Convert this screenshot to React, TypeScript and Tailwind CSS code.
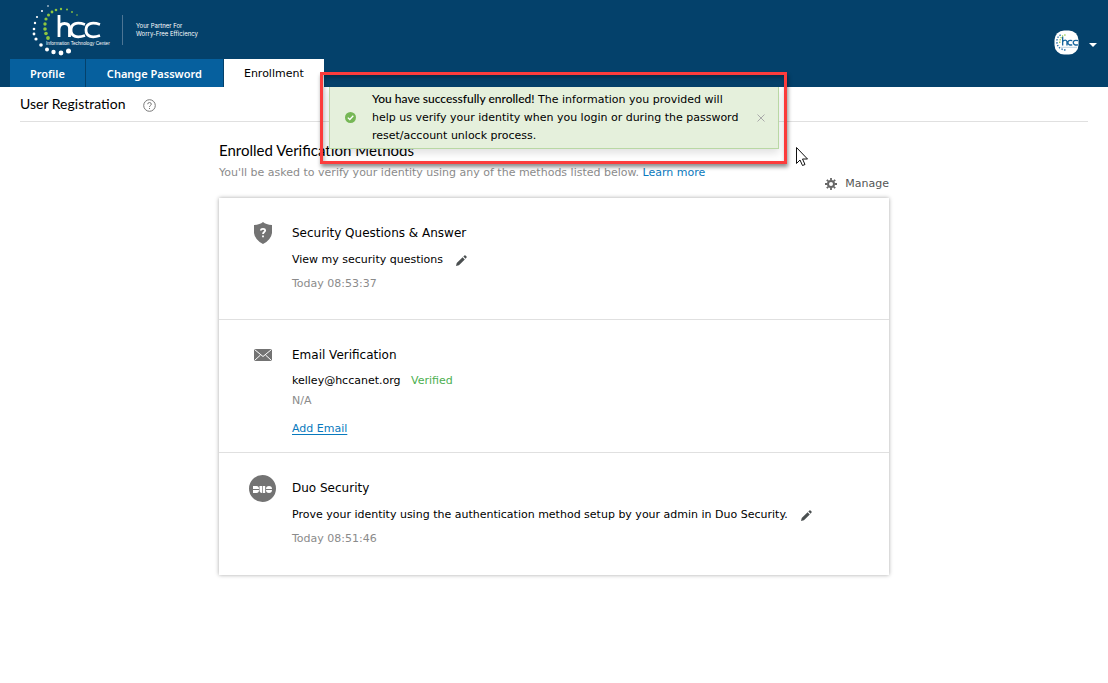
import React from "react";

const body = "text-[11px] leading-[18px]";

function Logo() {
  const dots: [number, number, number, string][] = [
    [48, 6, 0.8, "#fff"], [42, 11, 1, "#fff"], [37, 17, 1.1, "#fff"], [35, 23, 1.2, "#fff"], [34, 29, 1.3, "#fff"], [34, 34, 1.4, "#fff"], [36, 39, 1.6, "#fff"], [41, 45, 1.8, "#fff"], [47, 49.5, 2, "#fff"], [53.5, 52, 2.2, "#fff"], [61, 53, 2.4, "#fff"], [68.5, 51, 2.5, "#fff"],
    [77, 15, 0.8, "#8dc63f"], [72, 12, 0.9, "#8dc63f"], [67, 9.5, 1, "#8dc63f"], [61, 9, 1.2, "#8dc63f"], [56, 10, 1.3, "#8dc63f"], [52, 12, 1.4, "#8dc63f"], [48.5, 15, 1.5, "#8dc63f"], [46, 19, 1.6, "#8dc63f"], [45, 24, 1.7, "#8dc63f"], [45, 29, 1.8, "#8dc63f"], [46, 33.5, 1.8, "#8dc63f"], [48, 38, 1.9, "#8dc63f"],
  ];
  return (
    <svg viewBox="32 0 174 58" className="h-[58px] w-[174px]" role="img" aria-label="hcc Information Technology Center">
      {dots.map(([x, y, r, c], i) => <circle key={i} cx={x} cy={y} r={r} fill={c} />)}
      <g fill="none" stroke="#fff" strokeWidth="2.800">
        <path d="M59 15V37M59 29Q59.500 23.500 64.500 23.500Q69.500 23.500 69.500 28.500V37" />
        <path d="M85 24.500C76 21.500 71 24 71 30S76 38.500 85 35.500" />
        <path d="M100 24.500C91 21.500 86 24 86 30S91 38.500 100 35.500" />
      </g>
      <text x="46" y="45" fontSize="4.700" fill="#fff" fontFamily="Liberation Sans, sans-serif">Information Technology Center</text>
      <path d="M122.500 15V45" stroke="#4d7594" />
      <g fontSize="6" fill="#fff" fontFamily="Inter, sans-serif">
        <text x="136" y="28">Your Partner For</text>
        <text x="136" y="36">Worry-Free Efficiency</text>
      </g>
    </svg>
  );
}

function Pencil() {
  return (
    <svg viewBox="0 0 12 12" className="ml-px size-[11px]" fill="#4a4f50" aria-hidden="true">
      <path d="M0 12L.8 8.800 7.200 2.400 9.600 4.800 3.200 11.200ZM8 1.600L9.200.5Q9.800 0 10.400.5L11.500 1.600Q12 2.200 11.500 2.800L10.400 4Z" />
    </svg>
  );
}

function Shield() {
  return (
    <svg viewBox="0 0 18 22" className="h-[22px] w-[18px]" aria-hidden="true">
      <path d="M9 0Q6 2.500 0 3V11Q1 18 9 22Q17 18 18 11V3Q12 2.500 9 0Z" fill="#737373" />
      <path d="M6.800 8.500Q7 6.800 9 6.800T11.200 8.500C11.200 10 9 10 9 12M9 13.500V15.300" fill="none" stroke="#fff" strokeWidth="1.800" />
    </svg>
  );
}

function Envelope() {
  return (
    <svg viewBox="0 0 18 12" className="h-3 w-[18px]" aria-hidden="true">
      <rect width="18" height="12" rx="1" fill="#737373" />
      <path d="M.5.500L9 7.500 17.500.500M.5 11.500L6.500 6M17.500 11.500L11.500 6" fill="none" stroke="#fff" strokeWidth="1" />
    </svg>
  );
}

function Duo() {
  return (
    <svg viewBox="0 0 27 27" className="size-[27px]" aria-hidden="true">
      <circle cx="13.500" cy="13.500" r="13.500" fill="#737373" />
      <g fill="#fff">
        <path d="M4 11H7.500Q10 11 10 14H4ZM4 15H10Q10 18 7.500 18H4Z" />
        <path d="M10.500 11H13V18Q10.500 18 10.500 15ZM13.700 11H16.200V18H13.700Z" />
        <path d="M17 14Q17 11 20 11T23 14ZM17 15H23Q23 18 20 18T17 15Z" />
      </g>
    </svg>
  );
}

function Method({ icon, title, className, children }: { icon: React.ReactNode; title: string; className: string; children: React.ReactNode }) {
  return (
    <section className={`flex border-[#e0e0e0] pt-6 pr-6 pl-7 ${className}`}>
      <div className="flex h-[22px] w-[31px] shrink-0 items-center justify-center">{icon}</div>
      <div className="ml-3.5 min-w-0">
        <h3 className="text-[12px] leading-[22px]">{title}</h3>
        {children}
      </div>
    </section>
  );
}

export default function App() {
  return (
    <div className="min-h-screen bg-white font-['DejaVu_Sans',Verdana,sans-serif] text-black">
      <header className="flex h-[87px] flex-col justify-between bg-[#04416b]">
        <div className="flex h-[59px] items-start justify-between pl-8">
          <Logo />
          <button aria-label="Account menu" className="mt-[30px] mr-[11px] flex items-center gap-2.5">
            <svg viewBox="0 0 26 26" className="size-[25px]" aria-hidden="true">
              <rect width="25" height="25" x=".5" y=".5" rx="10" fill="#fff" />
              <path d="M7 5Q3 7 3 12Q3 20 13 21" fill="none" stroke="#2c73ad" strokeWidth="1.500" strokeDasharray="1.500 1.500" />
              <path d="M12 5Q6 6 6 14" fill="none" stroke="#8dc63f" strokeWidth="1.300" strokeDasharray="1.300 1.200" />
              <path d="M9 7V16M9 12Q12 9 13.500 12V16M19 11Q14.500 10 14.500 13T19 15.500M25 11Q20 10 20 13T25 15.500" fill="none" stroke="#17659e" strokeWidth="1.400" />
              <path d="M7 18H24" stroke="#b9d0e1" />
            </svg>
            <svg viewBox="0 0 8 4" className="mt-1 h-1 w-2" aria-hidden="true"><path d="M0 0H8L4 4Z" fill="#fff" /></svg>
          </button>
        </div>
        <nav className="flex h-7 gap-px pl-2.5 font-['Noto_Sans',sans-serif] text-[11px] font-semibold text-white">
          <a href="#profile" className="flex items-center bg-[#06609e] px-5 pt-0.5">Profile</a>
          <a href="#password" className="flex items-center bg-[#06609e] px-[21px] pt-0.5">Change Password</a>
          <a href="#enrollment" aria-current="page" className="flex items-center bg-white px-5 pt-0.5 font-['DejaVu_Sans',sans-serif] font-normal text-black">Enrollment</a>
        </nav>
      </header>

      <div className="mx-5 flex h-[35px] items-center gap-[18px] border-b border-[#e0e0e0]">
        <h1 className="font-['Lato',sans-serif] text-[14px] leading-5">User Registration</h1>
        <button aria-label="Help" className="mt-0.5">
          <svg viewBox="0 0 13 13" className="size-[13px]" fill="none" stroke="#777" aria-hidden="true">
            <circle cx="6.500" cy="6.500" r="5.800" />
            <path d="M4.700 5.200Q4.800 3.500 6.500 3.500T8.300 5.200C8.300 6.500 6.500 6.500 6.500 8M6.500 9V10" />
          </svg>
        </button>
      </div>

      <main className="mx-auto mt-[18px] w-full max-w-[670px]">
        <div className="flex items-end justify-between">
          <div>
            <h2 className="font-['Lato',sans-serif] text-[15px] leading-5">Enrolled Verification Methods</h2>
            <p className={`${body} mt-1 mb-4 text-[#8b8b8b]`}>
              You'll be asked to verify your identity using any of the methods listed below. <a href="#learn" className="text-[#0879bd]">Learn more</a>
            </p>
          </div>
          <button className="mb-1.5 flex items-center gap-2 text-[11px] text-[#555]">
            <svg viewBox="0 0 12 12" className="size-3" fill="none" stroke="#666" aria-hidden="true">
              <circle cx="6" cy="6" r="3" strokeWidth="2" />
              <path d="M6 0V2M6 10V12M0 6H2M10 6H12M1.800 1.800L3.200 3.200M8.800 8.800L10.200 10.200M1.800 10.200L3.200 8.800M8.800 3.200L10.200 1.800" strokeWidth="1.800" />
            </svg>
            Manage
          </button>
        </div>

        <div className="bg-white shadow-[0_0_4px_rgba(0,0,0,0.35)]">
          <Method icon={<Shield />} title="Security Questions &amp; Answer" className="h-[121px]">
            <p className={`${body} mt-[7px] flex items-center gap-3`}>View my security questions <button aria-label="Edit security questions"><Pencil /></button></p>
            <p className={`${body} mt-1.5 text-[#8b8b8b]`}>Today 08:53:37</p>
          </Method>
          <Method icon={<Envelope />} title="Email Verification" className="h-[133px] border-t">
            <p className={`${body} mt-1.5`}>kelley@hccanet.org <span className="ml-[7px] text-[#4caf50]">Verified</span></p>
            <p className={`${body} mt-0.5 text-[#8b8b8b]`}>N/A</p>
            <a href="#add" className={`${body} mt-2.5 inline-block text-[#0879bd] underline underline-offset-2`}>Add Email</a>
          </Method>
          <Method icon={<Duo />} title="Duo Security" className="h-[123px] border-t">
            <p className={`${body} mt-[7px] flex items-center gap-3`}>Prove your identity using the authentication method setup by your admin in Duo Security. <button aria-label="Edit Duo Security"><Pencil /></button></p>
            <p className={`${body} mt-1.5 text-[#8b8b8b]`}>Today 08:51:46</p>
          </Method>
        </div>
      </main>

      <div role="status" className="absolute top-[72px] left-1/2 ml-[-234px] w-[467px] border-[3px] border-[#fc3c3c] pt-3 pr-[5px] pb-3 pl-1.5 shadow-[1px_3px_4px_rgba(0,0,0,0.45),inset_1px_3px_4px_rgba(0,0,0,0.3)]">
        <div className="flex items-center border border-t-0 border-[#b9d8a4] bg-[#e5f0dc] py-[3px] pr-[13px] pl-[15px] shadow-[0_4px_8px_rgba(0,0,0,0.12)]">
          <svg viewBox="0 0 11 11" className="size-[11px] shrink-0" aria-hidden="true">
            <circle cx="5.500" cy="5.500" r="5.500" fill="#76b756" />
            <path d="M2.800 5.600L4.800 7.500 8.300 3.800" fill="none" stroke="#fff" strokeWidth="1.300" />
          </svg>
          <p className={`${body} ml-4 flex-1`}>
            <span className="font-['Lato',sans-serif] text-[12px] font-medium">You have successfully enrolled!</span> The information you provided will<br />help us verify your identity when you login or during the password<br />reset/account unlock process.
          </p>
          <button aria-label="Close">
            <svg viewBox="0 0 8 8" className="size-2" aria-hidden="true"><path d="M.5.500L7.500 7.500M7.500.500L.5 7.500" stroke="#aaa" /></svg>
          </button>
        </div>
      </div>

      <svg viewBox="0 0 12 20" className="absolute top-[147px] left-1/2 ml-[242px] h-5 w-3" aria-hidden="true">
        <path d="M.5.500V16.500L4 13 6.500 18.500 9 17.500 6.500 12H11.500Z" fill="#fff" stroke="#111" />
      </svg>
    </div>
  );
}
